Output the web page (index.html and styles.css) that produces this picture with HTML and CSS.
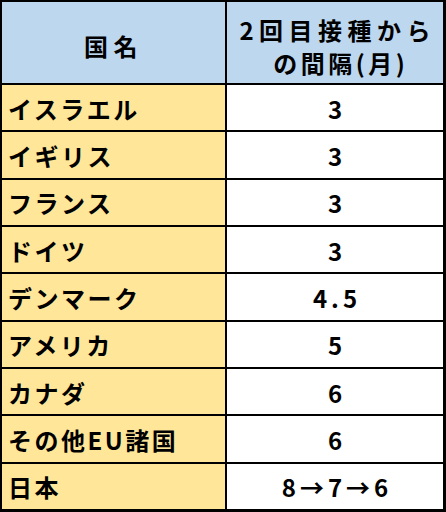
FILE: index.html
```html
<!DOCTYPE html>
<html lang="ja">
<head>
<meta charset="utf-8">
<link rel="stylesheet" href="styles.css">
</head>
<body>
<div class="table">
  <div class="cell head">国名</div>
  <div class="cell head"><span class="line">2回目接種から</span><span class="line tight">の間隔(月)</span></div>
  <div class="cell name">イスラエル</div><div class="cell val">3</div>
  <div class="cell name">イギリス</div><div class="cell val">3</div>
  <div class="cell name">フランス</div><div class="cell val">3</div>
  <div class="cell name">ドイツ</div><div class="cell val">3</div>
  <div class="cell name">デンマーク</div><div class="cell val">4.5</div>
  <div class="cell name">アメリカ</div><div class="cell val">5</div>
  <div class="cell name">カナダ</div><div class="cell val">6</div>
  <div class="cell name">その他EU諸国</div><div class="cell val">6</div>
  <div class="cell name">日本</div><div class="cell val">8→7→6</div>
</div>
</body>
</html>
```
FILE: styles.css
```css
html, body {
  margin: 0;
  padding: 0;
  background: #ffffff;
}
.table {
  width: 446px;
  height: 512px;
  box-sizing: border-box;
  background: #000000;
  padding: 2px 3px 3px 2px;
  display: grid;
  grid-template-columns: 223px 1fr;
  grid-template-rows: 81px repeat(9, 1fr);
  gap: 2px;
  font-family: "Noto Sans CJK JP", "Noto Sans", sans-serif;
  font-weight: 700;
  font-size: 24px;
  color: #000000;
}
.cell {
  display: flex;
  align-items: center;
  line-height: 33px;
}
.head {
  background: #bdd7ee;
  flex-direction: column;
  justify-content: center;
  text-align: center;
  padding-top: 6px;
  letter-spacing: 5.5px;
}
.line {
  display: block;
  text-indent: 5.5px;
}
.line.tight {
  letter-spacing: 3.5px;
  text-indent: 3.5px;
  padding-left: 8px;
}
.name {
  background: #ffe699;
  padding-left: 6px;
  padding-top: 1px;
  letter-spacing: 2.5px;
}
.val {
  background: #ffffff;
  justify-content: center;
  padding-top: 1px;
  letter-spacing: 4px;
  text-indent: 4px;
}
```
